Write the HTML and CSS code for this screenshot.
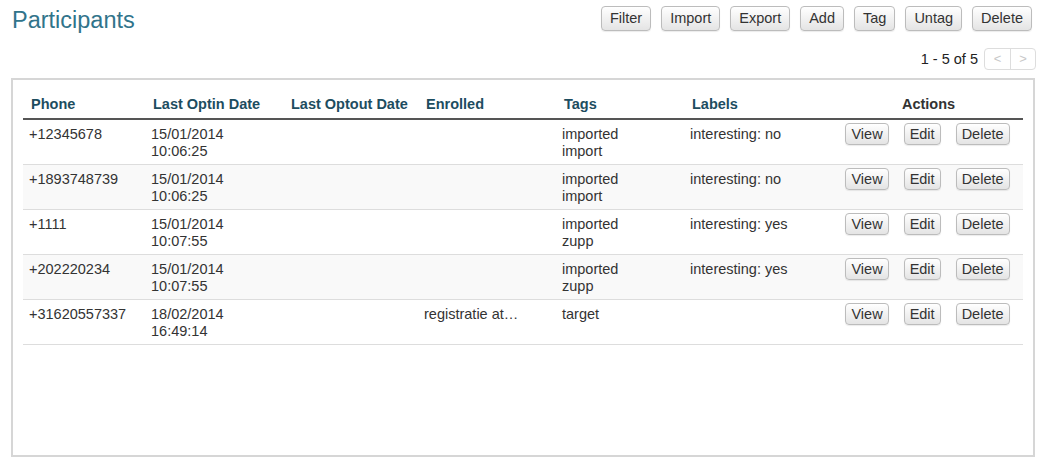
FILE: index.html
```html
<!DOCTYPE html>
<html>
<head>
<meta charset="utf-8">
<link rel="stylesheet" href="styles.css">
</head>
<body>
<div class="page">
  <div class="topbar">
    <h1 class="title">Participants</h1>
    <div class="toolbar">
      <button class="btn">Filter</button>
      <button class="btn">Import</button>
      <button class="btn">Export</button>
      <button class="btn">Add</button>
      <button class="btn">Tag</button>
      <button class="btn">Untag</button>
      <button class="btn">Delete</button>
    </div>
  </div>
  <div class="pager-row">
    <span class="pager-text">1 - 5 of 5</span>
    <div class="pager">
      <span class="pager-btn">&lt;</span>
      <span class="pager-btn">&gt;</span>
    </div>
  </div>
  <div class="panel">
    <table class="grid">
      <colgroup>
        <col class="c-phone"><col class="c-optin"><col class="c-optout"><col class="c-enrolled"><col class="c-tags"><col class="c-labels"><col class="c-actions">
      </colgroup>
      <thead>
        <tr>
          <th><a class="sort">Phone</a></th>
          <th><a class="sort">Last Optin Date</a></th>
          <th><a class="sort">Last Optout Date</a></th>
          <th><a class="sort">Enrolled</a></th>
          <th><a class="sort">Tags</a></th>
          <th><a class="sort">Labels</a></th>
          <th class="act-head">Actions</th>
        </tr>
      </thead>
      <tbody>
        <tr>
          <td>+12345678</td>
          <td>15/01/2014<br>10:06:25</td>
          <td></td>
          <td></td>
          <td>imported<br>import</td>
          <td>interesting: no</td>
          <td class="acts"><button class="sbtn">View</button><button class="sbtn">Edit</button><button class="sbtn">Delete</button></td>
        </tr>
        <tr>
          <td>+1893748739</td>
          <td>15/01/2014<br>10:06:25</td>
          <td></td>
          <td></td>
          <td>imported<br>import</td>
          <td>interesting: no</td>
          <td class="acts"><button class="sbtn">View</button><button class="sbtn">Edit</button><button class="sbtn">Delete</button></td>
        </tr>
        <tr>
          <td>+1111</td>
          <td>15/01/2014<br>10:07:55</td>
          <td></td>
          <td></td>
          <td>imported<br>zupp</td>
          <td>interesting: yes</td>
          <td class="acts"><button class="sbtn">View</button><button class="sbtn">Edit</button><button class="sbtn">Delete</button></td>
        </tr>
        <tr>
          <td>+202220234</td>
          <td>15/01/2014<br>10:07:55</td>
          <td></td>
          <td></td>
          <td>imported<br>zupp</td>
          <td>interesting: yes</td>
          <td class="acts"><button class="sbtn">View</button><button class="sbtn">Edit</button><button class="sbtn">Delete</button></td>
        </tr>
        <tr>
          <td>+31620557337</td>
          <td>18/02/2014<br>16:49:14</td>
          <td></td>
          <td>registratie at…</td>
          <td>target</td>
          <td></td>
          <td class="acts"><button class="sbtn">View</button><button class="sbtn">Edit</button><button class="sbtn">Delete</button></td>
        </tr>
      </tbody>
    </table>
  </div>
</div>
</body>
</html>
```
FILE: styles.css
```css
* { box-sizing: border-box; }
html, body { margin: 0; padding: 0; background: #fff; }
body {
  font-family: "Liberation Sans", Arial, sans-serif;
  font-size: 14.5px;
  color: #333;
}
.page { padding: 0 9px 0 11px; width: 1044px; }

.topbar {
  display: flex;
  justify-content: space-between;
  align-items: flex-start;
  padding-top: 6px;
}
.title {
  margin: 1px 0 0 1px;
  font-size: 23.5px;
  font-weight: normal;
  line-height: 27px;
  color: #31748b;
}
.toolbar { display: flex; gap: 10px; margin-right: 3px; }

.btn, .sbtn {
  font-family: "Liberation Sans", Arial, sans-serif;
  font-size: 14.5px;
  color: #333;
  background: linear-gradient(#ffffff, #e4e4e4);
  border: 1px solid #bcbcbc;
  border-radius: 4px;
  box-shadow: 0 1px 1px rgba(0,0,0,0.08);
  cursor: pointer;
  margin: 0;
}
.btn { height: 25px; padding: 0 8px; line-height: 23px; }

.pager-row {
  display: flex;
  justify-content: flex-end;
  align-items: center;
  gap: 6px;
  margin-top: 13px;
  margin-right: -1px;
  height: 23px;
}
.pager-text { color: #222; }
.pager {
  display: flex;
  border: 1px solid #ddd;
  border-radius: 4px;
  height: 22px;
}
.pager-btn {
  width: 25px;
  display: flex;
  align-items: center;
  justify-content: center;
  color: #c8c8c8;
  font-size: 13px;
}
.pager-btn + .pager-btn { border-left: 1px solid #ddd; }

.panel {
  margin-top: 8px;
  height: 379px;
  border: 2px solid #d6d6d6;
  padding: 10px 10px 0 10px;
}

.grid {
  width: 1000px;
  border-collapse: collapse;
  table-layout: fixed;
}
.c-phone { width: 122px; }
.c-optin { width: 138px; }
.c-optout { width: 135px; }
.c-enrolled { width: 138px; }
.c-tags { width: 128px; }
.c-labels { width: 148px; }
.c-actions { width: 191px; }

.grid th {
  text-align: left;
  font-weight: bold;
  padding: 6px 6px 5px 8px;
  line-height: 17px;
  border-bottom: 2px solid #555;
  white-space: nowrap;
}
.sort { color: #1d4d5f; text-decoration: none; }
.grid th.act-head { text-align: center; color: #333; }

.grid td {
  padding: 6px 6px 4px;
  line-height: 17px;
  vertical-align: top;
  border-top: 1px solid #ddd;
  white-space: nowrap;
}
.grid tbody tr:last-child td { border-bottom: 1px solid #ddd; }
.grid tbody tr:nth-child(even) td { background: #f9f9f9; }
.grid td.acts { text-align: center; padding-top: 3px; }
.sbtn { height: 22px; padding: 0 5px; line-height: 20px; }
.sbtn + .sbtn { margin-left: 15px; }
```
